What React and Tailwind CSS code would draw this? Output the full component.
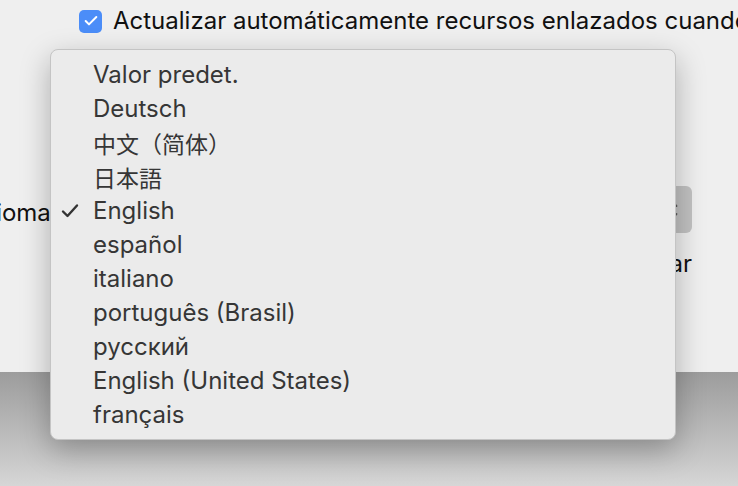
import { Check } from 'lucide-react';

const LANGUAGES = [
  { label: 'Valor predet.' },
  { label: 'Deutsch' },
  { label: '中文（简体）', cjk: 'sc' },
  { label: '日本語', cjk: 'jp' },
  { label: 'English', checked: true },
  { label: 'español' },
  { label: 'italiano' },
  { label: 'português (Brasil)' },
  { label: 'русский' },
  { label: 'English (United States)' },
  { label: 'français' },
];

function Chevrons() {
  return (
    <svg width="10" height="22" viewBox="0 0 10 22" fill="none" stroke="#5a5a5a" strokeWidth="1.8" strokeLinecap="round" strokeLinejoin="round">
      <path d="M1.5 7 L5 3.5 L8.5 7" />
      <path d="M1.5 15 L5 18.5 L8.5 15" />
    </svg>
  );
}

export default function App() {
  return (
    <div className="relative w-[738px] h-[486px] overflow-hidden flex flex-col font-['Inter','Liberation_Sans',sans-serif]">
      {/* preferences window behind the menu */}
      <div className="h-[372px] bg-[#efefef] flex flex-col">
        <label className="flex items-center gap-[11px] pl-[79px] pt-[6px] h-[36px]">
          <span className="shrink-0 w-[23px] h-[23px] rounded-[5px] bg-[#4b8df8] flex items-center justify-center">
            <Check size={16} strokeWidth={3} className="text-white" />
          </span>
          <span className="text-[24px] leading-[30px] text-[#111] whitespace-nowrap">
            Actualizar automáticamente recursos enlazados cuando
          </span>
        </label>

        <div className="flex items-center mt-[150px] h-[47px]">
          <span className="ml-[-25px] mt-[6px] text-[24px] text-[#111] whitespace-nowrap">Idioma:</span>
          <div className="ml-auto mr-[46px] w-[560px] h-[47px] rounded-[6px] bg-[#c2c2c2] flex items-center justify-end pr-[14px]">
            <Chevrons />
          </div>
        </div>

        <div className="flex justify-end pr-[46px] mt-[16px]">
          <span className="text-[24px] leading-[30px] text-[#111]">Restaurar</span>
        </div>
      </div>

      {/* desktop below the window */}
      <div className="flex-1 bg-gradient-to-b from-[#9c9c9c] to-[#d6d6d6]" />

      {/* language popup menu */}
      <div className="absolute left-[50px] top-[49px] w-[626px] h-[391px] rounded-[8px] bg-[#ebebeb] border border-[#c4c4c4] shadow-[0_10px_30px_rgba(0,0,0,0.28)] pt-[8px]">
        {LANGUAGES.map((lang) => (
          <div key={lang.label} className="relative h-[34px] flex items-center pl-[42px]">
            {lang.checked && (
              <svg className="absolute left-[10px] top-[9px]" width="18" height="16" viewBox="0 0 18 16" fill="none" stroke="#333" strokeWidth="2.4" strokeLinecap="round" strokeLinejoin="round">
                <path d="M2 8.5 L6.5 13 L16 2.5" />
              </svg>
            )}
            <span
              className={
                lang.cjk === 'sc'
                  ? "text-[23px] leading-[30px] text-[#363636] font-['Noto_Sans_CJK_SC',sans-serif]"
                  : lang.cjk === 'jp'
                  ? "text-[23px] leading-[30px] text-[#363636] font-['Noto_Sans_CJK_JP',sans-serif]"
                  : 'text-[24px] leading-[30px] text-[#363636]'
              }
            >
              {lang.label}
            </span>
          </div>
        ))}
      </div>
    </div>
  );
}
